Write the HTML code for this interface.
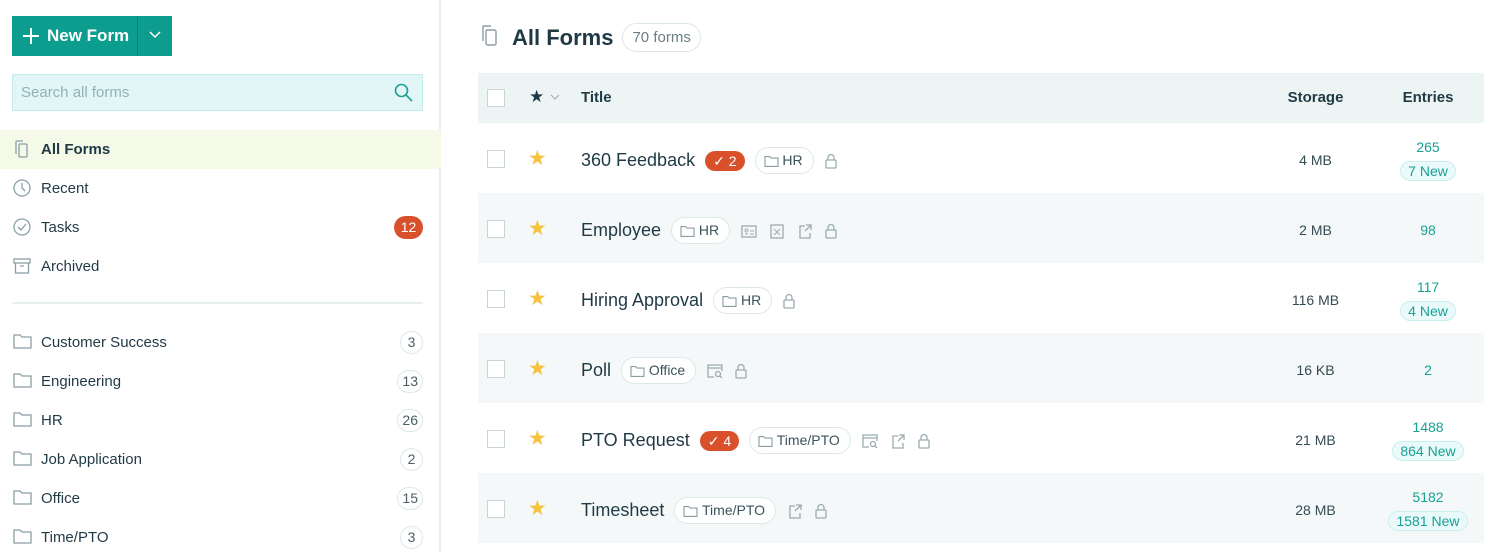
<!DOCTYPE html>
<html><head><meta charset="utf-8"><style>
*{box-sizing:border-box;margin:0;padding:0}
body{width:1500px;height:552px;overflow:hidden;background:#fff;font-family:"Liberation Sans",sans-serif;color:#1f3a45;position:relative}
.a{position:absolute}
.side{left:0;top:0;width:441px;height:552px;border-right:2px solid #e6eeee}
.btn{left:12px;top:16px;width:160px;height:40px;background:#0c9d8f;color:#fff;font-weight:bold;font-size:17px}
.search{left:12px;top:74px;width:411px;height:37px;background:#e2f6f8;border:1px solid #c7ecee;color:#8fb3b5;font-size:15px;padding:9px 8px}
.nav{left:0;width:441px;height:39px;font-size:15px;line-height:39px;padding-left:41px}
.ic{position:absolute;left:13px;top:10px}
.cnt{position:absolute;right:18px;top:8px;height:23px;min-width:23px;border:1px solid #dde8e8;border-radius:12px;font-size:14px;line-height:21px;text-align:center;padding:0 4px;color:#4a5f66}
.row{left:478px;width:1006px;height:70px}
.cb{position:absolute;left:9px;width:18px;height:18px;border:1px solid #c9d4d4;background:#fff}
.star{position:absolute;left:50px;color:#f5c242;font-size:21px}
.chip{display:inline-block;height:27px;border:1px solid #dde8e8;border-radius:14px;font-size:14px;line-height:25px;padding:0 10px 0 8px;color:#3a535c;background:#fff;vertical-align:middle}
.ob{display:inline-block;height:20px;background:#d9512b;color:#fff;border-radius:10px;font-size:14px;line-height:20px;padding:0 8px;vertical-align:middle}
.line{position:absolute;left:103px;display:flex;align-items:center;gap:10px;white-space:nowrap}
.st{position:absolute;left:780px;width:115px;text-align:center;font-size:14px;color:#344b53}
.en{position:absolute;left:900px;width:100px;text-align:center;font-size:14px;color:#17a194}
.new{display:inline-block;height:20px;border:1px solid #c9eeee;background:#eafafa;border-radius:10px;padding:0 7px;line-height:18px;font-size:14px;color:#17a194}
svg{display:inline-block;vertical-align:middle}
</style></head><body>
<div class="a side"></div>
<div class="a btn">
 <svg class="a" style="left:10px;top:11px" width="18" height="18" viewBox="0 0 18 18"><path d="M9 1v16M1 9h16" stroke="#fff" stroke-width="2"/></svg>
 <span class="a" style="left:35px;top:10px">New Form</span>
 <div class="a" style="left:125px;top:0;width:1px;height:40px;background:#0b8074"></div>
 <svg class="a" style="left:137px;top:14px" width="12" height="10" viewBox="0 0 12 10"><path d="M1 2l5 5 5-5" stroke="#fff" stroke-width="1.5" fill="none"/></svg>
</div>
<div class="a search">Search all forms
 <svg class="a" style="right:9px;top:8px" width="19" height="19" viewBox="0 0 19 19"><circle cx="7.5" cy="7.5" r="6" stroke="#1aa193" stroke-width="1.6" fill="none"/><path d="M12 12l6 6" stroke="#1aa193" stroke-width="1.6"/></svg></div>

<div class="a nav" style="top:130px;background:#f5f9e7;font-weight:bold">
 <svg class="ic" width="18" height="20" viewBox="0 0 18 20"><path d="M3 14V2a1 1 0 011-1h6" stroke="#8a9ea4" fill="none" stroke-width="1.3"/><rect x="6" y="4" width="8" height="13" rx="1" stroke="#8a9ea4" fill="none" stroke-width="1.3"/></svg>All Forms</div>
<div class="a nav" style="top:169px"><svg class="ic" width="19" height="19" viewBox="0 0 19 19"><circle cx="9" cy="9" r="8" stroke="#8a9ea4" fill="none" stroke-width="1.3"/><path d="M9 4v5l3 3" stroke="#8a9ea4" fill="none" stroke-width="1.3"/></svg>Recent</div>
<div class="a nav" style="top:208px"><svg class="ic" width="19" height="19" viewBox="0 0 19 19"><circle cx="9" cy="9" r="8" stroke="#8a9ea4" fill="none" stroke-width="1.3"/><path d="M5 9l3 3 5-6" stroke="#8a9ea4" fill="none" stroke-width="1.3"/></svg>Tasks<span class="a" style="right:18px;top:8px;height:23px;width:29px;border-radius:12px;background:#d9512b;color:#fff;font-size:14px;line-height:23px;text-align:center">12</span></div>
<div class="a nav" style="top:247px"><svg class="ic" width="19" height="19" viewBox="0 0 19 19"><rect x="1" y="2" width="16" height="4" stroke="#8a9ea4" fill="none" stroke-width="1.3"/><path d="M2.5 6v10h13V6M7 9h4" stroke="#8a9ea4" fill="none" stroke-width="1.3"/></svg>Archived</div>
<div class="a" style="left:12px;top:302px;width:411px;height:2px;background:#e6eeee"></div>

<div class="a nav" style="top:323px"><svg class="ic" width="19" height="17" viewBox="0 0 19 17"><path d="M1 2h6l2 2h9v11H1z" stroke="#8a9ea4" fill="none" stroke-width="1.3"/></svg>Customer Success<span class="cnt">3</span></div>
<div class="a nav" style="top:362px"><svg class="ic" width="19" height="17" viewBox="0 0 19 17"><path d="M1 2h6l2 2h9v11H1z" stroke="#8a9ea4" fill="none" stroke-width="1.3"/></svg>Engineering<span class="cnt">13</span></div>
<div class="a nav" style="top:401px"><svg class="ic" width="19" height="17" viewBox="0 0 19 17"><path d="M1 2h6l2 2h9v11H1z" stroke="#8a9ea4" fill="none" stroke-width="1.3"/></svg>HR<span class="cnt">26</span></div>
<div class="a nav" style="top:440px"><svg class="ic" width="19" height="17" viewBox="0 0 19 17"><path d="M1 2h6l2 2h9v11H1z" stroke="#8a9ea4" fill="none" stroke-width="1.3"/></svg>Job Application<span class="cnt">2</span></div>
<div class="a nav" style="top:479px"><svg class="ic" width="19" height="17" viewBox="0 0 19 17"><path d="M1 2h6l2 2h9v11H1z" stroke="#8a9ea4" fill="none" stroke-width="1.3"/></svg>Office<span class="cnt">15</span></div>
<div class="a nav" style="top:518px"><svg class="ic" width="19" height="17" viewBox="0 0 19 17"><path d="M1 2h6l2 2h9v11H1z" stroke="#8a9ea4" fill="none" stroke-width="1.3"/></svg>Time/PTO<span class="cnt">3</span></div>

<svg class="a" style="left:481px;top:25px" width="18" height="22" viewBox="0 0 18 22"><path d="M2 16V2a1 1 0 011-1h7" stroke="#8a9ea4" fill="none" stroke-width="1.4"/><rect x="5" y="5" width="10" height="15" rx="1.5" stroke="#8a9ea4" fill="none" stroke-width="1.4"/></svg>
<div class="a" style="left:512px;top:23px;font-size:22px;font-weight:bold;color:#1f3a45;display:flex;align-items:center;gap:9px">All Forms<span style="height:29px;border:1px solid #dde8e8;border-radius:15px;padding:0 9px;font-size:15px;line-height:27px;color:#6a7e84;font-weight:normal">70 forms</span></div>

<div class="a row" style="top:73px;height:50px;background:#edf4f4">
 <div class="cb" style="top:16px"></div>
 <div class="a" style="left:51px;top:14px;font-size:17px;color:#1f3a45">★</div>
 <svg class="a" style="left:72px;top:21px" width="10" height="7" viewBox="0 0 10 7"><path d="M1 1l4 4 4-4" stroke="#9aacb0" fill="none"/></svg>
 <div class="a" style="left:103px;top:16px;font-size:15px;font-weight:bold">Title</div>
 <div class="a" style="left:780px;width:115px;text-align:center;top:16px;font-size:15px;font-weight:bold">Storage</div>
 <div class="a" style="left:900px;width:100px;text-align:center;top:16px;font-size:15px;font-weight:bold">Entries</div>
</div>

<div class="a row" style="top:123px">
 <div class="cb" style="top:27px"></div><div class="star" style="top:23px">★</div>
 <div class="line" style="top:24px"><span style="font-size:18px">360 Feedback</span><span class="ob">✓ 2</span><span class="chip"><svg width="15" height="13" viewBox="0 0 19 17"><path d="M1 2h6l2 2h9v11H1z" stroke="#8a9ea4" fill="none" stroke-width="1.5"/></svg> HR</span><svg width="14" height="16" viewBox="0 0 14 16"><rect x="2" y="7" width="10" height="8" rx="1" stroke="#9aacb0" fill="none" stroke-width="1.3"/><path d="M4 7V4.5a3 3 0 016 0V7" stroke="#9aacb0" fill="none" stroke-width="1.3"/></svg></div>
 <div class="st" style="top:29px">4 MB</div>
 <div class="en" style="top:16px">265<br><span class="new" style="margin-top:6px">7 New</span></div>
</div>
<div class="a row" style="top:193px;background:#f4f8f8">
 <div class="cb" style="top:27px"></div><div class="star" style="top:23px">★</div>
 <div class="line" style="top:24px"><span style="font-size:18px">Employee</span><span class="chip"><svg width="15" height="13" viewBox="0 0 19 17"><path d="M1 2h6l2 2h9v11H1z" stroke="#8a9ea4" fill="none" stroke-width="1.5"/></svg> HR</span>
 <svg width="18" height="16" viewBox="0 0 18 16"><rect x="2" y="3" width="14" height="11" stroke="#9aacb0" fill="none" stroke-width="1.3"/><path d="M5 11h3M10 8h4M10 11h4" stroke="#9aacb0"/><circle cx="6.5" cy="7.5" r="1.5" stroke="#9aacb0" fill="none"/></svg>
 <svg width="18" height="16" viewBox="0 0 18 16"><rect x="3" y="2" width="12" height="13" stroke="#9aacb0" fill="none" stroke-width="1.3"/><path d="M6 6l6 6M12 6l-6 6" stroke="#9aacb0"/></svg>
 <svg width="18" height="16" viewBox="0 0 18 16"><path d="M9 3H4v12h10v-5M10 2h5v5M15 2l-6 6" stroke="#9aacb0" fill="none" stroke-width="1.3"/></svg>
 <svg width="14" height="16" viewBox="0 0 14 16"><rect x="2" y="7" width="10" height="8" rx="1" stroke="#9aacb0" fill="none" stroke-width="1.3"/><path d="M4 7V4.5a3 3 0 016 0V7" stroke="#9aacb0" fill="none" stroke-width="1.3"/></svg></div>
 <div class="st" style="top:29px">2 MB</div>
 <div class="en" style="top:29px">98</div>
</div>
<div class="a row" style="top:263px">
 <div class="cb" style="top:27px"></div><div class="star" style="top:23px">★</div>
 <div class="line" style="top:24px"><span style="font-size:18px">Hiring Approval</span><span class="chip"><svg width="15" height="13" viewBox="0 0 19 17"><path d="M1 2h6l2 2h9v11H1z" stroke="#8a9ea4" fill="none" stroke-width="1.5"/></svg> HR</span><svg width="14" height="16" viewBox="0 0 14 16"><rect x="2" y="7" width="10" height="8" rx="1" stroke="#9aacb0" fill="none" stroke-width="1.3"/><path d="M4 7V4.5a3 3 0 016 0V7" stroke="#9aacb0" fill="none" stroke-width="1.3"/></svg></div>
 <div class="st" style="top:29px">116 MB</div>
 <div class="en" style="top:16px">117<br><span class="new" style="margin-top:6px">4 New</span></div>
</div>
<div class="a row" style="top:333px;background:#f4f8f8">
 <div class="cb" style="top:27px"></div><div class="star" style="top:23px">★</div>
 <div class="line" style="top:24px"><span style="font-size:18px">Poll</span><span class="chip"><svg width="15" height="13" viewBox="0 0 19 17"><path d="M1 2h6l2 2h9v11H1z" stroke="#8a9ea4" fill="none" stroke-width="1.5"/></svg> Office</span>
 <svg width="18" height="16" viewBox="0 0 18 16"><path d="M8 14H2V2h14v6M2 5h14" stroke="#9aacb0" fill="none" stroke-width="1.3"/><circle cx="12" cy="11" r="2.5" stroke="#9aacb0" fill="none" stroke-width="1.3"/><path d="M14 13l2 2" stroke="#9aacb0" stroke-width="1.3"/></svg>
 <svg width="14" height="16" viewBox="0 0 14 16"><rect x="2" y="7" width="10" height="8" rx="1" stroke="#9aacb0" fill="none" stroke-width="1.3"/><path d="M4 7V4.5a3 3 0 016 0V7" stroke="#9aacb0" fill="none" stroke-width="1.3"/></svg></div>
 <div class="st" style="top:29px">16 KB</div>
 <div class="en" style="top:29px">2</div>
</div>
<div class="a row" style="top:403px">
 <div class="cb" style="top:27px"></div><div class="star" style="top:23px">★</div>
 <div class="line" style="top:24px"><span style="font-size:18px">PTO Request</span><span class="ob">✓ 4</span><span class="chip"><svg width="15" height="13" viewBox="0 0 19 17"><path d="M1 2h6l2 2h9v11H1z" stroke="#8a9ea4" fill="none" stroke-width="1.5"/></svg> Time/PTO</span>
 <svg width="18" height="16" viewBox="0 0 18 16"><path d="M8 14H2V2h14v6M2 5h14" stroke="#9aacb0" fill="none" stroke-width="1.3"/><circle cx="12" cy="11" r="2.5" stroke="#9aacb0" fill="none" stroke-width="1.3"/><path d="M14 13l2 2" stroke="#9aacb0" stroke-width="1.3"/></svg>
 <svg width="18" height="16" viewBox="0 0 18 16"><path d="M9 3H4v12h10v-5M10 2h5v5M15 2l-6 6" stroke="#9aacb0" fill="none" stroke-width="1.3"/></svg>
 <svg width="14" height="16" viewBox="0 0 14 16"><rect x="2" y="7" width="10" height="8" rx="1" stroke="#9aacb0" fill="none" stroke-width="1.3"/><path d="M4 7V4.5a3 3 0 016 0V7" stroke="#9aacb0" fill="none" stroke-width="1.3"/></svg></div>
 <div class="st" style="top:29px">21 MB</div>
 <div class="en" style="top:16px">1488<br><span class="new" style="margin-top:6px">864 New</span></div>
</div>
<div class="a row" style="top:473px;background:#f4f8f8">
 <div class="cb" style="top:27px"></div><div class="star" style="top:23px">★</div>
 <div class="line" style="top:24px"><span style="font-size:18px">Timesheet</span><span class="chip"><svg width="15" height="13" viewBox="0 0 19 17"><path d="M1 2h6l2 2h9v11H1z" stroke="#8a9ea4" fill="none" stroke-width="1.5"/></svg> Time/PTO</span>
 <svg width="18" height="16" viewBox="0 0 18 16"><path d="M9 3H4v12h10v-5M10 2h5v5M15 2l-6 6" stroke="#9aacb0" fill="none" stroke-width="1.3"/></svg>
 <svg width="14" height="16" viewBox="0 0 14 16"><rect x="2" y="7" width="10" height="8" rx="1" stroke="#9aacb0" fill="none" stroke-width="1.3"/><path d="M4 7V4.5a3 3 0 016 0V7" stroke="#9aacb0" fill="none" stroke-width="1.3"/></svg></div>
 <div class="st" style="top:29px">28 MB</div>
 <div class="en" style="top:16px">5182<br><span class="new" style="margin-top:6px">1581 New</span></div>
</div>
</body></html>
